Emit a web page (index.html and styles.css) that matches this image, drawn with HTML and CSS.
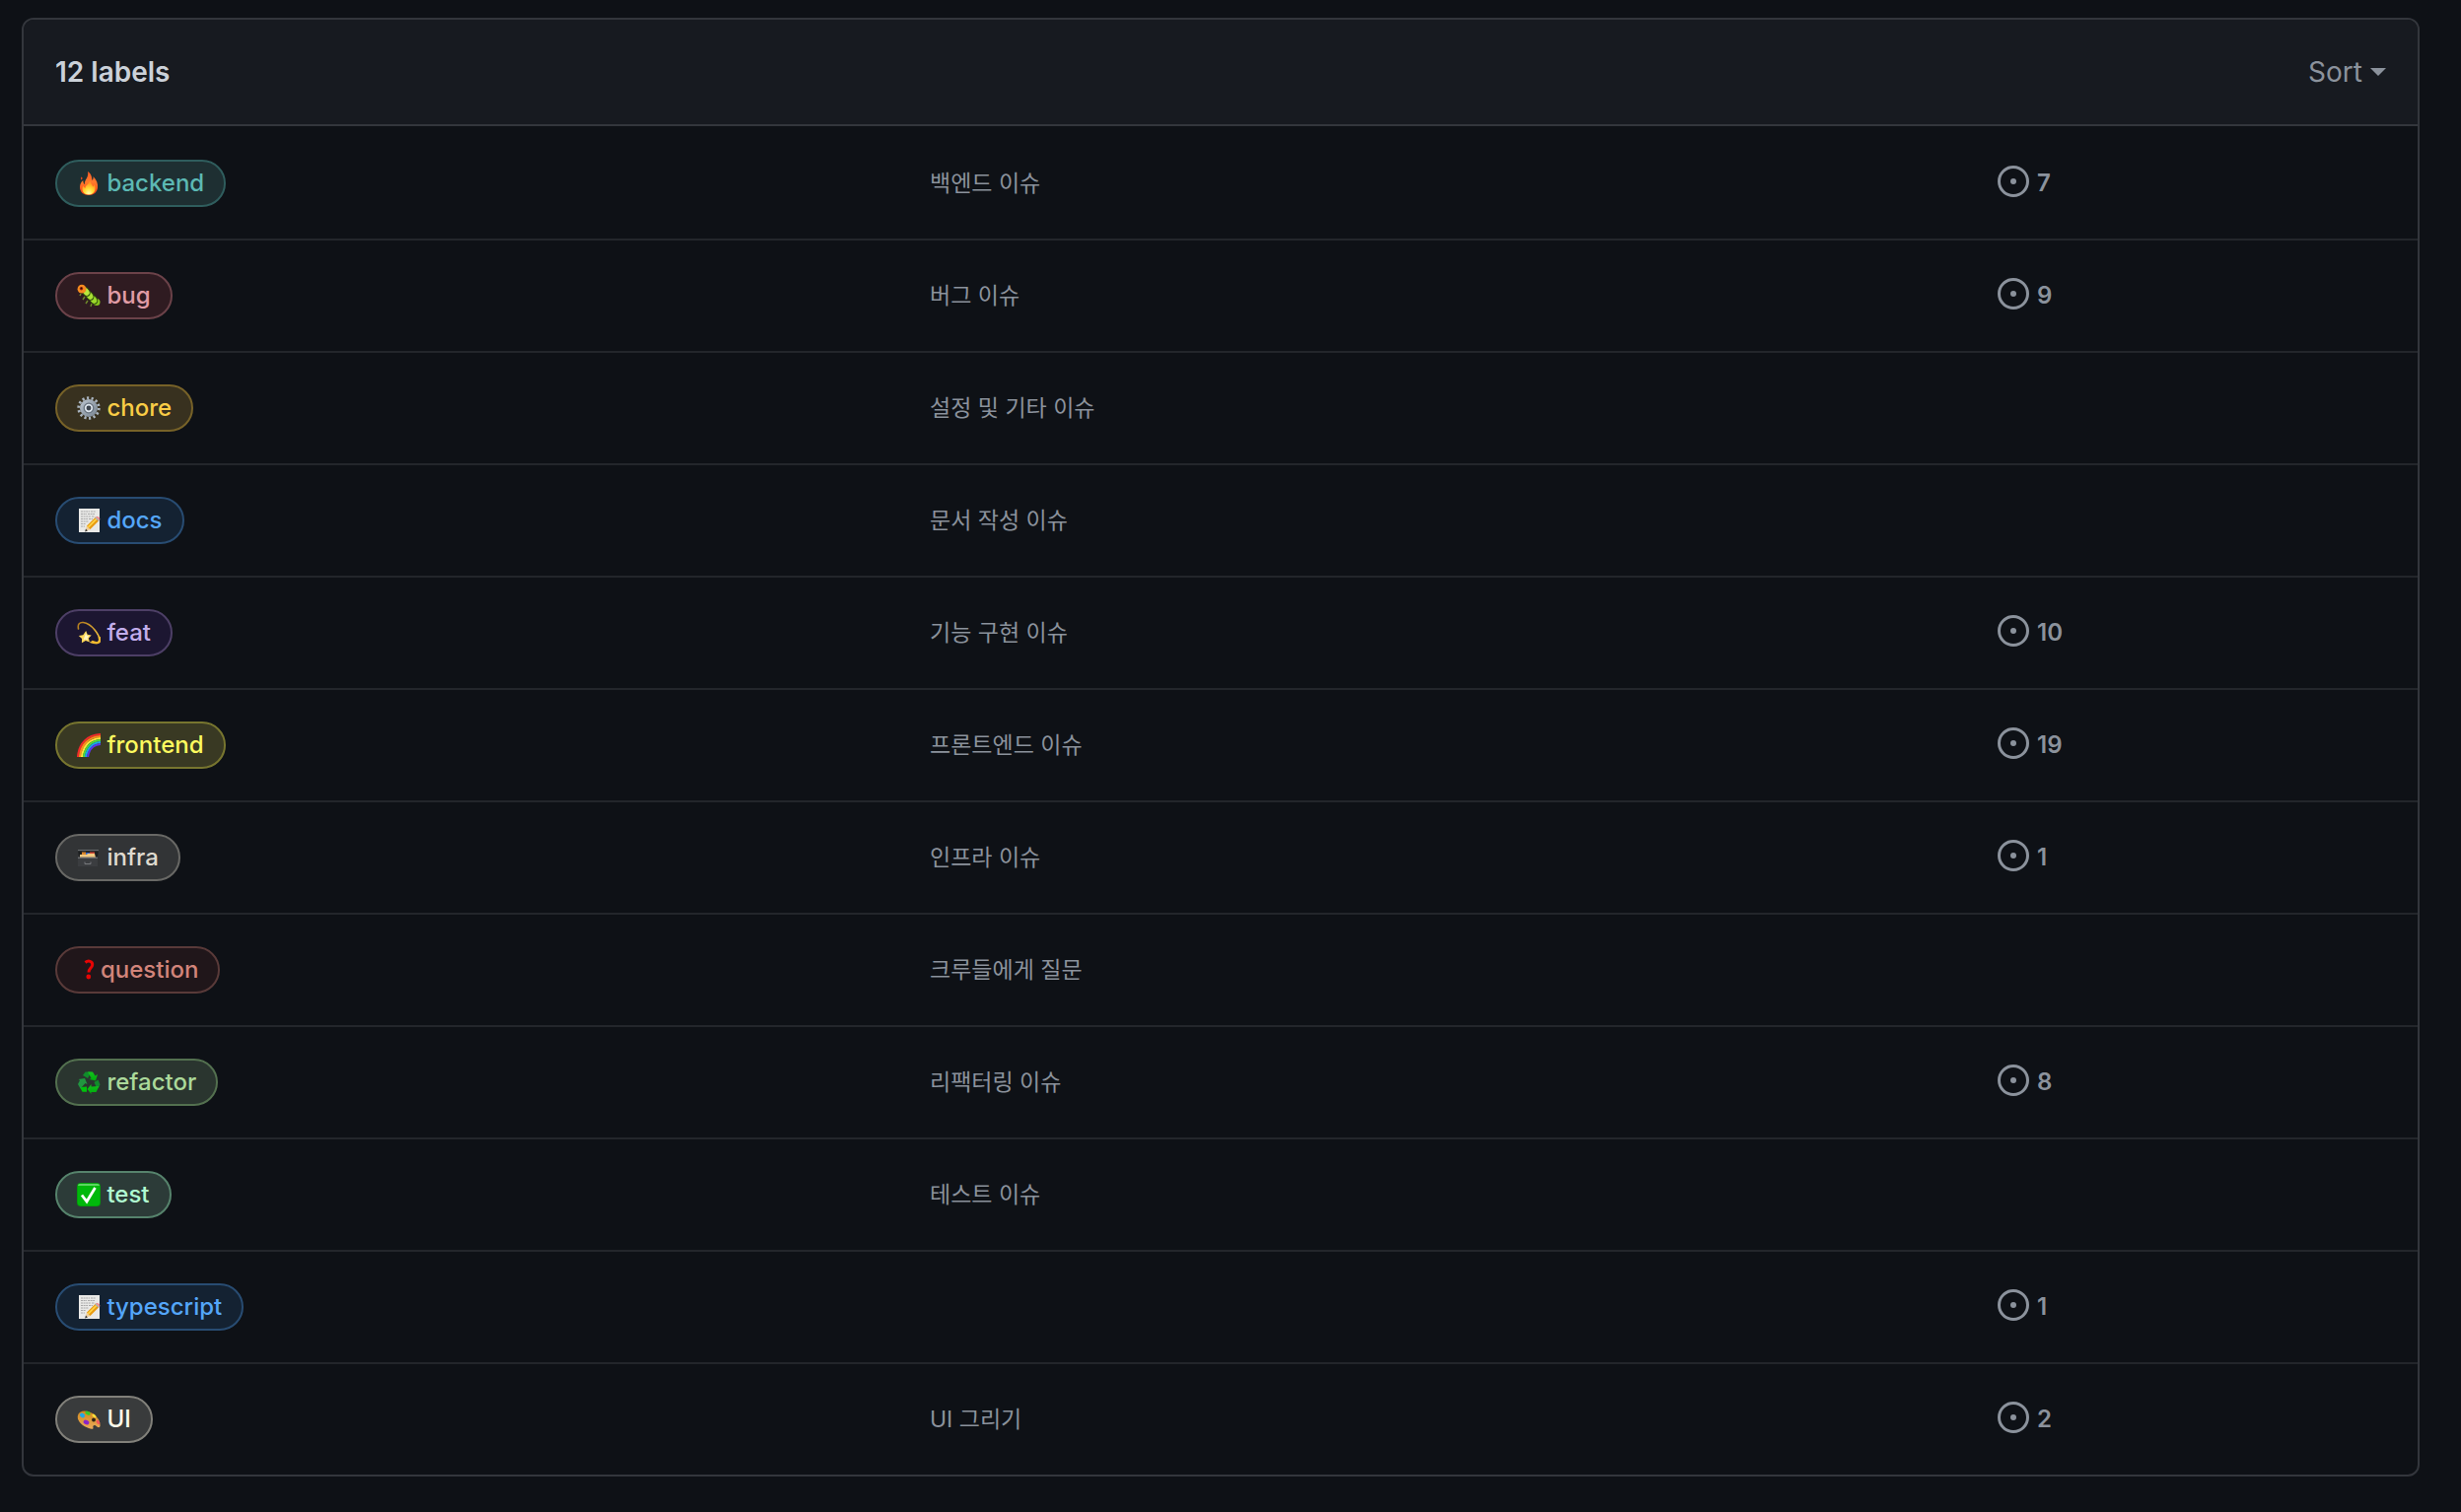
FILE: index.html
```html
<!DOCTYPE html>
<html lang="ko">
<head>
    <meta charset="UTF-8">
    <meta name="viewport" content="width=device-width, initial-scale=1.0">
    <title>Labels</title>
    <link rel="stylesheet" href="styles.css">
</head>
<body>
    <!-- shared icons -->
    <svg class="sprite" aria-hidden="true">
        <defs>
            <linearGradient id="rail" x1="0" y1="0" x2="0" y2="1"><stop offset="0" stop-color="#ff5a24"/><stop offset=".45" stop-color="#ff7a2c"/><stop offset="1" stop-color="#ff3d12"/></linearGradient>
            <linearGradient id="steel" x1="0" y1="0" x2="1" y2="1"><stop offset="0" stop-color="#b4bec9"/><stop offset="1" stop-color="#7d8995"/></linearGradient>
            <linearGradient id="gold" x1="0" y1="0" x2="1" y2="1"><stop offset="0" stop-color="#b27a1c"/><stop offset="1" stop-color="#ffcf45"/></linearGradient>
            <linearGradient id="wood" x1="0" y1="0" x2="0" y2="1"><stop offset="0" stop-color="#d38a1c"/><stop offset="1" stop-color="#e8a95a"/></linearGradient>
            <linearGradient id="leaf" x1="0" y1="0" x2="0" y2="1"><stop offset="0" stop-color="#12c41c"/><stop offset="1" stop-color="#00a80c"/></linearGradient>
            <radialGradient id="flame" cx=".5" cy=".9" r=".7"><stop offset="0" stop-color="#fff9b0"/><stop offset=".45" stop-color="#ffe03a"/><stop offset="1" stop-color="#ff9a1f"/></radialGradient>
        </defs>
        <symbol id="issue" viewBox="0 0 16 16">
            <circle cx="8" cy="8" r="7.25" fill="none" stroke="currentColor" stroke-width="1.5"/>
            <circle cx="8" cy="8" r="1.5" fill="currentColor"/>
        </symbol>
        <symbol id="memo" viewBox="0 0 24 24">
            <path d="M2 0h21v24H2z" fill="#e9e9e7"/>
            <path d="M4 3h9M14 3h5M4 5.500h6M11 5.500h7M4 8h10M15 8h3M4 10.500h7M12 10.500h4M4 13h8M4 15.500h5M4 18h4" stroke="#a9a9a9" stroke-width="1" stroke-dasharray="2 .6"/>
            <path d="M8.500 23l1.500-6 4 4z" fill="#f0cf9b"/>
            <path d="M8.200 23.400l.8-2.800 1.800 1.800z" fill="#333"/>
            <path d="M10 17.500L19 8.500l3.500 3.500-9 9z" fill="#e89a10"/>
            <path d="M10.800 18.200L19.800 9.300l1.200 1.200-9 9z" fill="#ffd447"/>
            <path d="M18.200 9.300l1-1 3.500 3.500-1 1z" fill="#a8adb3"/>
            <path d="M19.200 8.300c1.500-1.500 5.500 1.500 3.700 3.500z" fill="#f0808a"/>
        </symbol>
    </svg>

    <main class="labels">
        <header class="labels-header">
            <h2>12 labels</h2>
            <button class="sort" type="button">Sort<span class="caret"></span></button>
        </header>
        <ul class="labels-list">
            <li class="row">
                <div>
                    <a class="label backend" href="#"><svg class="emoji" viewBox="0 0 24 24"><path d="M11 0c4 2.500 4 6 4.500 9 1-1 1.300-2.300 1-4 3.500 3.500 5 7.500 4.500 11.500-.5 4.500-4 7.500-9 7.500s-9-3-9-8c0-3 1.300-5.500 3.300-7 0 2 .5 3.500 1.500 4.200C7.500 8 12.500 6 11 0z" fill="url(#rail)"/><path d="M4.500 5.500c1.300.3 1.300 2.200.2 3-1-.8-1-2.200-.2-3z" fill="#e8491f"/><path d="M13 9c.5 3 3 4 3 6.500 1-.4 1.500-1.500 1.500-2.500 2 3 1.500 10.500-5.500 10.500S4.500 17 6.500 14.500c.3 1.300 1 2 2 2.200C8.500 13.500 13 13 13 9z" fill="url(#flame)"/></svg> backend</a>
                </div>
                <p class="description">백엔드 이슈</p>
                <div><a class="issues" href="#"><svg class="issue-icon"><use href="#issue"/></svg>7</a></div>
            </li>
            <li class="row">
                <div>
                    <a class="label bug" href="#"><svg class="emoji" viewBox="0 0 24 24"><path d="M4 10l-1 2M8 13l-2 3M11 17l-2 3M15 20l-1 3" stroke="#6f8b2a" stroke-width="1.400"/><ellipse cx="20" cy="18.500" rx="3.500" ry="3.500" fill="#86c51c"/><ellipse cx="16.800" cy="16" rx="3.600" ry="4.600" transform="rotate(-35 16.800 16)" fill="#9bd82a" stroke="#29440c"/><ellipse cx="13" cy="12" rx="3.500" ry="4.600" transform="rotate(-35 13 12)" fill="#a9e034" stroke="#29440c"/><ellipse cx="9.300" cy="8" rx="3.500" ry="4.600" transform="rotate(-35 9.300 8)" fill="#b8e83d" stroke="#29440c"/><circle cx="5" cy="5.200" r="4.400" fill="#f58a1f"/><circle cx="4.500" cy="4.800" r="1.800" fill="#a82b10"/><circle cx="4.500" cy="4.500" r=".9" fill="#2b0c05"/></svg> bug</a>
                </div>
                <p class="description">버그 이슈</p>
                <div><a class="issues" href="#"><svg class="issue-icon"><use href="#issue"/></svg>9</a></div>
            </li>
            <li class="row">
                <div>
                    <a class="label chore" href="#"><svg class="emoji" viewBox="0 0 24 24"><circle cx="12" cy="12" r="10.300" fill="none" stroke="#aab5c0" stroke-width="2.800" stroke-dasharray="2.200 2.423"/><circle cx="12" cy="12" r="7.200" fill="#66717d" stroke="url(#steel)" stroke-width="3.600"/><circle cx="12" cy="12" r="3.300" fill="#3c4550" stroke="#dce4ec" stroke-width="1.700"/></svg> chore</a>
                </div>
                <p class="description">설정 및 기타 이슈</p>
            </li>
            <li class="row">
                <div>
                    <a class="label docs" href="#"><svg class="emoji"><use href="#memo"/></svg> docs</a>
                </div>
                <p class="description">문서 작성 이슈</p>
            </li>
            <li class="row">
                <div>
                    <a class="label feat" href="#"><svg class="emoji" viewBox="0 0 24 24"><path d="M1.500 8C-.5-2 11 .5 18 9c7 8.500 6.500 16.500-4 12.500" fill="none" stroke="url(#gold)" stroke-width="1.600" stroke-linecap="round"/><path d="M16 21c6 2.500 8 .5 7-4" fill="none" stroke="#f5b92c" stroke-width="2.400" stroke-linecap="round"/><path d="M9.200 10l1.500 3.800 4 .6-2.800 3 1 4-4-1.500-4 2.300.2-4.300-3.300-3 4.500-.7z" fill="#ffd75a"/><path d="M9.200 12l1 3 2.400.4-2 1.900.5 2.300-2.600-1-2 .8z" fill="#fff6c4"/></svg> feat</a>
                </div>
                <p class="description">기능 구현 이슈</p>
                <div><a class="issues" href="#"><svg class="issue-icon"><use href="#issue"/></svg>10</a></div>
            </li>
            <li class="row">
                <div>
                    <a class="label frontend" href="#"><svg class="emoji" viewBox="0 0 24 24"><g fill="none" stroke-width="2.100"><path d="M1 24C2 10 11 1.500 24 1" stroke="#f02a2a"/><path d="M3 24C4 11.500 12 3.500 24 3" stroke="#ff8a1c"/><path d="M5 24C6 13 13 5.500 24 5" stroke="#ffe63b"/><path d="M7 24C8 14.500 14 7.500 24 7" stroke="#4ddb3b"/><path d="M9 24c1-8 6-14.500 15-15" stroke="#1aa8e8"/><path d="M11 24c1-7 5.500-12.500 13-13" stroke="#5a35e8"/></g></svg> frontend</a>
                </div>
                <p class="description">프론트엔드 이슈</p>
                <div><a class="issues" href="#"><svg class="issue-icon"><use href="#issue"/></svg>19</a></div>
            </li>
            <li class="row">
                <div>
                    <a class="label infra" href="#"><svg class="emoji" viewBox="0 0 24 24"><path d="M1 4h21l-1 8H2z" fill="#1c1e20"/><path d="M1 4h21v1.200H1z" fill="#686b6e"/><path d="M5 6.500h4V9H5z" fill="#d9852a"/><path d="M9 7h4v2H9z" fill="#3767c4"/><path d="M13 6.500h5V9h-5z" fill="#cf4533"/><path d="M3 9h7l1-1h7l1 4H3z" fill="#f2c981"/><path d="M1 12h20v9H1z" fill="#3b3d40"/><path d="M1 11.500h20V13H1z" fill="#66686b"/><path d="M8 16.500v2h6v-2" fill="none" stroke="#77797c"/></svg> infra</a>
                </div>
                <p class="description">인프라 이슈</p>
                <div><a class="issues" href="#"><svg class="issue-icon"><use href="#issue"/></svg>1</a></div>
            </li>
            <li class="row">
                <div>
                    <a class="label question" href="#"><svg class="emoji" viewBox="0 0 24 24"><path d="M8.500 4.500c3-2.500 7.500-1.500 7.200 2.500C15.500 10 12 10.500 12 14.500" fill="none" stroke="#e60505" stroke-width="3"/><circle cx="11.800" cy="19" r="2.400" fill="#e60505"/></svg>question</a>
                </div>
                <p class="description">크루들에게 질문</p>
            </li>
            <li class="row">
                <div>
                    <a class="label refactor" href="#"><svg class="emoji" viewBox="0 0 24 24"><path d="M6 5l2.500-3.500h6L11 8z" fill="#118c2b"/><path d="M11 1.500h5l2.500 4L21 4l-2 6.500-6.500-1.500 2-1z" fill="url(#leaf)"/><path d="M17.500 12l4-2.500 2 5-3 4.500z" fill="#118c2b"/><path d="M22.500 16l-3 6h-5V24l-4-5 4-5v2.500z" fill="url(#leaf)"/><path d="M10 16.500v5.300H5.500L3 17z" fill="#00c20c"/><path d="M3.500 18.500L1 14l2-4-1.500-1L8 8l2.500 6-2-1z" fill="#219540"/></svg> refactor</a>
                </div>
                <p class="description">리팩터링 이슈</p>
                <div><a class="issues" href="#"><svg class="issue-icon"><use href="#issue"/></svg>8</a></div>
            </li>
            <li class="row">
                <div>
                    <a class="label test" href="#"><svg class="emoji" viewBox="0 0 24 24"><rect width="24" height="24" rx="4" fill="#05990c"/><rect x=".8" y=".8" width="22.400" height="22.400" rx="3.500" fill="#00b80b"/><path d="M3 1h18q2 0 2 2H1q0-2 2-2z" fill="#5bd760"/><path d="M5 12.500l5 6.500L18.500 5" fill="none" stroke="#fff" stroke-width="2.800"/></svg> test</a>
                </div>
                <p class="description">테스트 이슈</p>
            </li>
            <li class="row">
                <div>
                    <a class="label docs" href="#"><svg class="emoji"><use href="#memo"/></svg> typescript</a>
                </div>
                <p class="description"></p>
                <div><a class="issues" href="#"><svg class="issue-icon"><use href="#issue"/></svg>1</a></div>
            </li>
            <li class="row">
                <div>
                    <a class="label ui" href="#"><svg class="emoji" viewBox="0 0 24 24"><path d="M1 8c1-5 8-6 14-2.500C21 9 24 14 23.500 19c-1 2.500-3 .5-5-1-2 0-2.500 1-2 2.300.3 2-2 1.700-4.500.7C5 18.500-.5 13 1 8z" fill="url(#wood)"/><circle cx="17" cy="12.500" r="1.900" fill="#2d2115"/><ellipse cx="5.500" cy="8" rx="2.700" ry="2.200" transform="rotate(35 5.500 8)" fill="#21a8e8"/><ellipse cx="11" cy="5.700" rx="2.800" ry="1.800" transform="rotate(25 11 5.700)" fill="#3bc925"/><ellipse cx="17.500" cy="8.500" rx="2.400" ry="1.400" transform="rotate(40 17.500 8.500)" fill="#ffdf38"/><ellipse cx="21.500" cy="15" rx="2.300" ry="1.500" transform="rotate(55 21.500 15)" fill="#f2565a"/><ellipse cx="9.500" cy="15" rx="3" ry="2.200" transform="rotate(25 9.500 15)" fill="#8a25c9"/></svg> UI</a>
                </div>
                <p class="description">UI 그리기</p>
                <div><a class="issues" href="#"><svg class="issue-icon"><use href="#issue"/></svg>2</a></div>
            </li>
        </ul>
    </main>
</body>
</html>
```

FILE: styles.css
```css
* {box-sizing: border-box;}
body {
    margin: 0;
    padding: 18px 42px 36px 22px;
    background: #0e1116;
    color: #8b929c;
    font-family: Inter, "Noto Sans CJK KR", sans-serif;
    font-size: 24px;
    line-height: 36px;
}
a {color: inherit; text-decoration: none;}
.sprite {position: absolute; width: 0; height: 0;}

.labels {
    border: 2px solid #33363c;
    border-radius: 12px;
    overflow: hidden;
}
.labels-header {
    display: flex;
    align-items: center;
    justify-content: space-between;
    padding: 32px;
    background: #171a20;
    border-bottom: 2px solid #33363c;
}
.labels-header h2 {
    margin: 0;
    color: #cbd1d9;
    font-size: 28px;
    font-weight: 600;
    line-height: 42px;
}
.sort {
    display: flex;
    align-items: center;
    gap: 8px;
    padding: 0;
    border: 0;
    background: none;
    color: #8b929c;
    font: inherit;
    font-size: 28px;
    line-height: 42px;
    cursor: pointer;
}
.caret {
    border: 8px solid transparent;
    border-top-color: currentColor;
    border-bottom: 0;
}

.labels-list {margin: 0; padding: 0; list-style: none;}
.row {
    display: grid;
    grid-template-columns: 887fr 1083fr 394fr;
    align-items: center;
    padding: 32px;
    border-top: 2px solid #23262b;
}
.row:first-child {border-top-color: transparent;}
.row > div {display: flex;}
.description {margin: 0; font-size: 23px;}

.label {
    padding: 0 20px;
    border: 2px solid;
    border-radius: 24px;
    font-weight: 500;
    line-height: 44px;
    white-space: nowrap;
}
.emoji {width: 24px; height: 24px; vertical-align: -4px;}

.backend {background: #1e2f32; border-color: #2f5d5d; color: #5cb9b4;}
.bug {background: #2f1b21; border-color: #6b4249; color: #e09ca6;}
.chore {background: #38311f; border-color: #776228; color: #f9cc46;}
.docs {background: #142232; border-color: #284c72; color: #54a6f9;}
.feat {background: #1c1631; border-color: #4d3f66; color: #c2adeb;}
.frontend {background: #393923; border-color: #77752f; color: #fdfa5f;}
.infra {background: #323436; border-color: #686865; color: #dfdacf;}
.question {background: #20161a; border-color: #593a39; color: #d2847a;}
.refactor {background: #2a352f; border-color: #53704f; color: #abd99a;}
.test {background: #2c3b38; border-color: #56836c; color: #b0fbd1;}
.ui {background: #393b3c; border-color: #81807a; color: #fdfbeb;}

.issues {font-weight: 600;}
.issue-icon {
    width: 32px;
    height: 32px;
    margin-right: 8px;
    vertical-align: text-bottom;
}
```
